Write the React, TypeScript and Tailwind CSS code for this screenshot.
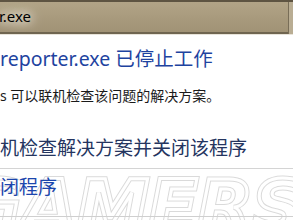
export default function App() {
  const wm =
    'absolute left-[-38px] top-[170px] whitespace-nowrap text-[73px] font-bold italic leading-none tracking-[-1px] text-transparent';
  return (
    <div
      className="relative w-[293px] h-[220px] overflow-hidden bg-white"
      style={{ fontFamily: '"Noto Sans", "Noto Sans CJK SC", sans-serif' }}
    >
      {/* watermark, sits under the dialog text */}
      <div className="pointer-events-none select-none" style={{ fontFamily: '"DejaVu Sans", sans-serif' }}>
        <div className={`${wm} [-webkit-text-stroke:5px_#dadada]`}>GAMERS</div>
        <div className={`${wm} [-webkit-text-stroke:3px_#ffffff]`}>GAMERS</div>
      </div>

      {/* title bar */}
      <div className="relative h-[35px] border-t-2 border-t-[#5e5442] border-b border-b-[#e8e4da] bg-gradient-to-b from-[#b2a487] via-[#a89a7d] to-[#a09275]">
        <div className="absolute inset-x-0 bottom-0 h-[2px] bg-[#6f6550]" />
        <div className="absolute right-[4px] top-0 bottom-0 w-[1px] bg-[#786d57]" />
        <div className="absolute right-0 top-0 bottom-0 w-[4px] bg-[#b9ad93]" />
        <div className="flex h-full items-center">
          <span className="-ml-[1px] pb-[3px] text-[15px] text-black [text-shadow:0_0_8px_#f0ece4,0_0_12px_#f0ece4,0_0_16px_#e8e2d4]">
            r.exe
          </span>
        </div>
      </div>

      {/* content */}
      <div className="relative pt-[12px]">
        <div className="text-[19.5px] leading-[24px] text-[#1e43a0]">reporter.exe 已停止工作</div>
        <div className="mt-[16px] text-[14px] leading-[18px] text-[#1a1a1a]">
          s 可以联机检查该问题的解决方案。
        </div>
        <div className="mt-[31px] text-[19px] leading-[24px] text-[#25355f]">
          机检查解决方案并关闭该程序
        </div>
        <div className="mt-[8px] h-[1px] bg-[#d4d4d4]" />
        <div className="mt-[6px] text-[19px] leading-[24px] text-[#1c46ad]">闭程序</div>
        <div className="mt-[17px] h-[1px] bg-[#cfcfcf]" />
      </div>
    </div>
  );
}
